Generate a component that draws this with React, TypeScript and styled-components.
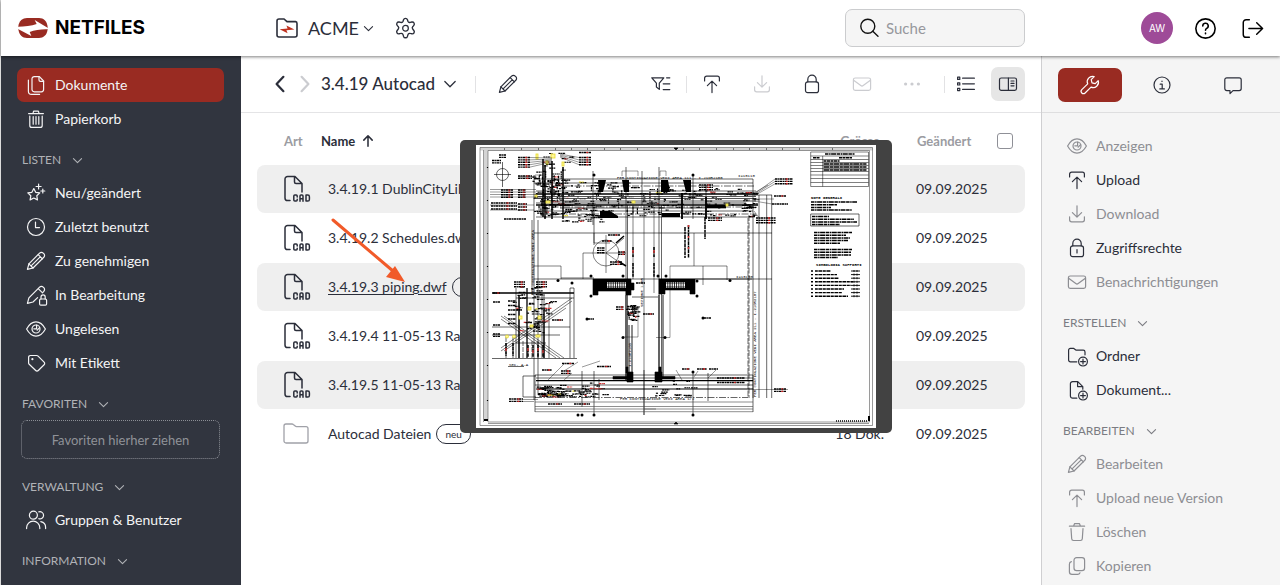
import React from "react";
import styled, { createGlobalStyle } from "styled-components";

const ink = "#2b2e3a";
const red = "#992b22";

const GlobalStyle = createGlobalStyle`
  *, *::before, *::after { box-sizing: border-box; }
  body { margin: 0; background: #fff; color: ${ink}; font: 14px/20px Lato, "Noto Sans", sans-serif; overflow: hidden; }
  button, input { font: inherit; color: inherit; }
  button { background: none; border: 0; padding: 0; cursor: pointer; }
  a { color: inherit; text-decoration: none; }
`;

/* ---------- icons ---------- */

type IconName = keyof typeof shapes;

const star = "M7.8 5.6l1.9 3.7 4.1.6-3 2.9.7 4.1-3.7-1.9-3.7 1.9.7-4.1-3-2.9 4.1-.6z";
const pencil = "M1.4 18.4l1.5-5.6L13.6 2.1a2.5 2.5 0 0 1 3.6 0l.6.6a2.5 2.5 0 0 1 0 3.6L7 17z";

const shapes = {
  docs: (
    <>
      <path d="M8.2 1.6h5.2l4.2 4.4v8.6a2.2 2.2 0 0 1-2.2 2.2H8.2A2.2 2.2 0 0 1 6 14.600V3.800a2.200 2.200 0 0 1 2.200-2.200z" />
      <path d="M13 1.800v3.200a1.400 1.400 0 0 0 1.400 1.400h3.200M2.400 5v11.200a3.200 3.200 0 0 0 3.200 3.200h8" />
    </>
  ),
  trashFull: <path d="M2.600 4.600h14.800M7 4.400l.6-2.300h4.800l.6 2.300M3.800 7v9.400a2 2 0 0 0 2 2h8.400a2 2 0 0 0 2-2V7M7.200 7.600v7.600M10 7.600v7.600M12.800 7.600v7.600" />,
  trash: <path d="M2.400 4.200h15.200M6.600 4l1-2.400h4.800l1 2.400M4 6.600l.7 10.200a1.800 1.800 0 0 0 1.800 1.700h7a1.800 1.800 0 0 0 1.800-1.700L16 6.600" />,
  stars: (
    <>
      <path d={star} />
      <path d="M12.600 1v5M10.100 3.500h5M16.800 6v4M14.800 8h4" />
    </>
  ),
  clock: (
    <>
      <circle cx="10" cy="10" r="8.500" />
      <path d="M9.500 5v5.600h4" />
    </>
  ),
  pencil: (
    <>
      <path d={pencil} />
      <path d="M12.200 3.600l4.200 4.200M2.900 12.800L7 17M14.200 5.800L5.600 14.400" />
    </>
  ),
  pencilLock: (
    <>
      <path d="M11.600 12.600L7 17l-5.600 1.400 1.500-5.600L13.600 2.100a2.500 2.500 0 0 1 3.600 0l.6.6a2.500 2.500 0 0 1 0 3.600l-1.400 1.500M12.200 3.600l3.600 3.600" />
      <rect x="13.600" y="14" width="7" height="6.200" rx="1.200" />
      <path d="M15 14v-2a2.100 2.100 0 0 1 4.200 0v2" />
    </>
  ),
  eye: (
    <>
      <path d="M.6 10C3 5.600 6.200 2.900 10 2.900S17 5.600 19.400 10C17 14.400 13.800 17.100 10 17.100S3 14.400.6 10z" />
      <circle cx="10" cy="10" r="4" />
      <path d="M10.600 6.200v3.600H7.800M13.600 8.600l-2.400 2.600" />
    </>
  ),
  tag: (
    <>
      <path d="M2.600 4.300a1.800 1.800 0 0 1 1.800-1.800h6.300a2 2 0 0 1 1.400.6l6 6a1.800 1.800 0 0 1 0 2.600l-5.800 5.800a1.800 1.800 0 0 1-2.600 0L3.200 11.300a2 2 0 0 1-.6-1.400z" />
      <circle cx="6.400" cy="6.200" r=".5" />
    </>
  ),
  people: (
    <>
      <circle cx="7.400" cy="5.200" r="4" />
      <path d="M.6 18.600v-.8a6.600 6.600 0 0 1 13.200 0v.8M12.800 1.900a3.600 3.600 0 1 1 0 6.800M14.800 11.600a6 6 0 0 1 4.800 6v1" />
    </>
  ),
  upload: <path d="M2.600 7V4.200a2 2 0 0 1 2-2h10.800a2 2 0 0 1 2 2V7M10 18.600V7.200M5.400 11.600L10 7.100l4.600 4.500" />,
  download: <path d="M2.600 12.800v3a2 2 0 0 0 2 2h10.800a2 2 0 0 0 2-2v-3M10 1.800v11M5.400 8.600l4.600 4.500 4.600-4.500" />,
  lock: (
    <>
      <rect x="3.500" y="7.800" width="13" height="10.800" rx="2.200" />
      <path d="M5.800 7.800V5.400a4.200 4.200 0 0 1 8.400 0v2.400" />
    </>
  ),
  lockHole: (
    <>
      <rect x="3.500" y="7.800" width="13" height="10.800" rx="2.200" />
      <path d="M5.800 7.800V5.400a4.200 4.200 0 0 1 8.400 0v2.400M10 11.600v3.400" />
    </>
  ),
  mail: (
    <>
      <rect x="1.400" y="4" width="17.200" height="12.400" rx="1.800" />
      <path d="M1.600 6.200l7.200 5.400a2 2 0 0 0 2.400 0l7.200-5.400" />
    </>
  ),
  dots: (
    <g fill="currentColor" stroke="none">
      <circle cx="3.600" cy="10" r="1.600" />
      <circle cx="10" cy="10" r="1.600" />
      <circle cx="16.400" cy="10" r="1.600" />
    </g>
  ),
  filter: <path d="M.8 3.800h12l-4.500 5.400v6.200L5.400 13V9.200zM15.600 3.800h3.200M12.200 9.800h6.600M12.200 15.600h6.600" />,
  list: (
    <>
      <path d="M6.600 4.200h11.800M6.600 9.800h11.800M6.600 15.400h11.800" />
      <rect x="1.600" y="3.200" width="2.200" height="2.200" />
      <rect x="1.600" y="8.800" width="2.200" height="2.200" />
      <rect x="1.600" y="14.400" width="2.200" height="2.200" />
    </>
  ),
  panel: (
    <>
      <rect x="1.500" y="4" width="17" height="12.400" rx="1.800" />
      <path d="M10.400 4v12.400M13 7h3M13 9.400h3M13 11.800h3" />
    </>
  ),
  wrench: <path d="M18.200 5.600l-3 3-3.200-.8-.8-3.200 3-3a5.300 5.300 0 0 0-6.500 7.200L1.800 14.700a2.100 2.100 0 0 0 3.300 3.300l5.900-5.900a5.300 5.300 0 0 0 7.200-6.500z" />,
  info: (
    <>
      <circle cx="10" cy="10" r="8" />
      <path d="M8.200 9.200h2v4.600M7.800 13.900h4.600M10 6v.5" />
    </>
  ),
  chat: <path d="M3.800 2.800h12.400a2 2 0 0 1 2 2v8.800a2 2 0 0 1-2 2H10l-3 3v-3H3.800a2 2 0 0 1-2-2V4.800a2 2 0 0 1 2-2z" />,
  copy: (
    <>
      <rect x="7" y="1.600" width="10.600" height="13" rx="2.600" />
      <path d="M4.400 5.600a2.600 2.600 0 0 0-2 2.600v7.600a2.600 2.600 0 0 0 2.600 2.600h5.600a2.600 2.600 0 0 0 2.400-1.600" />
    </>
  ),
  folderAdd: (
    <>
      <path d="M9.800 15.800H3.400a1.800 1.800 0 0 1-1.800-1.800V4.200a1.800 1.800 0 0 1 1.800-1.800h3.400l2.400 1.800h7a1.800 1.800 0 0 1 1.800 1.800v2.800" />
      <circle cx="16" cy="15.600" r="4.400" />
      <path d="M16 13.200V18M13.600 15.600h4.800" />
    </>
  ),
  docAdd: (
    <>
      <path d="M9.800 18.200H5.600A2.200 2.200 0 0 1 3.400 16V3.800a2.200 2.200 0 0 1 2.200-2.200h5.200l5 5v2.600M10.600 1.800v4.800h5" />
      <circle cx="16" cy="15.600" r="4.400" />
      <path d="M16 13.200V18M13.600 15.600h4.800" />
    </>
  ),
  search: (
    <>
      <circle cx="8.800" cy="8.200" r="7" />
      <path d="M13.800 13.300l5.200 4.900" />
    </>
  ),
  help: (
    <>
      <circle cx="10" cy="10" r="9.200" />
      <path d="M7.400 7.600a2.600 2.600 0 1 1 3.800 2.300c-.8.400-1.200.9-1.200 1.800M10 14.400v.5" />
    </>
  ),
  exit: <path d="M7 1.600H4a2.800 2.800 0 0 0-2.800 2.800v11.200A2.800 2.800 0 0 0 4 18.400h3M6.600 10h13M14 4.600l5.600 5.400-5.600 5.400" />,
  gear: (
    <>
      <path d="M8.300 1.400a1.800 1.800 0 0 1 3.400 0l.4 1.300a1.700 1.700 0 0 0 2.100 1l1.400-.3a1.800 1.800 0 0 1 1.700 2.900l-.9 1.100a1.700 1.700 0 0 0 0 2.300l.9 1.100a1.800 1.800 0 0 1-1.700 2.900l-1.400-.3a1.700 1.700 0 0 0-2.100 1.200l-.4 1.400a1.800 1.800 0 0 1-3.400 0l-.4-1.400a1.700 1.700 0 0 0-2.100-1.200l-1.400.3a1.800 1.800 0 0 1-1.700-2.900l.9-1.100a1.700 1.700 0 0 0 0-2.300l-.9-1.100a1.800 1.800 0 0 1 1.700-2.900l1.400.3a1.700 1.700 0 0 0 2.100-1z" transform="translate(-.9 .1) scale(1.090)" />
      <circle cx="10" cy="9.800" r="2.700" />
    </>
  ),
  left: <path d="M13.400 2.800L6.600 10l6.800 7.200" />,
  right: <path d="M6.600 2.800l6.800 7.200-6.800 7.200" />,
  down: <path d="M2.600 6.400L10 14l7.400-7.600" />,
  sortUp: <path d="M10 17.400V2.800M4 8.800l6-6.200 6 6.200" />,
};

const Svg = styled.svg`
  display: block;
  flex: none;
  fill: none;
  stroke: currentColor;
  stroke-linecap: round;
  stroke-linejoin: round;
  overflow: visible;
`;

function Icon({ name, size = 20, weight = 1.2 }: { name: IconName; size?: number; weight?: number }) {
  return (
    <Svg width={size} height={size} viewBox="0 0 20 20" strokeWidth={weight} aria-hidden="true">
      {shapes[name]}
    </Svg>
  );
}

/* ---------- frame ---------- */

const Shell = styled.div`
  height: 100vh;
  display: flex;
  flex-direction: column;
  border-left: 1px solid #dcdcdc;
`;
const columns = "240px minmax(0, 1fr) 239px";

const Header = styled.header`
  position: relative;
  z-index: 2;
  flex: none;
  height: 56px;
  display: grid;
  grid-template-columns: ${columns};
  align-items: center;
  background: #fff;
  box-shadow: 0 1px 3px rgba(0, 0, 0, 0.5);
`;
const Body = styled.div`
  flex: 1;
  min-height: 0;
  display: grid;
  grid-template-columns: ${columns};
`;

const Brand = styled.a`
  display: flex;
  align-items: center;
  gap: 7px;
  padding-left: 17px;
  color: #000;
  font: 700 19px/24px Inter, sans-serif;
`;
const HeaderMain = styled.div`
  display: flex;
  align-items: center;
  padding: 0 16px 0 35px;
`;
const Workspace = styled.button`
  display: flex;
  align-items: center;
  gap: 4px;
  font-size: 18px;
  line-height: 24px;
  margin-right: 21px;
  > svg:first-child { margin-right: 6px; }
`;
const IconButton = styled.button<{ $off?: boolean }>`
  display: flex;
  align-items: center;
  justify-content: center;
  color: ${(p) => (p.$off ? "#cbccd0" : ink)};
`;
const Search = styled.label`
  margin-left: auto;
  width: 180px;
  height: 38px;
  display: flex;
  align-items: center;
  gap: 7px;
  padding: 0 13px;
  background: #f5f5f5;
  border: 1px solid #cbccce;
  border-radius: 7px;
  color: #111;
  font-size: 15px;
  input {
    min-width: 0;
    flex: 1;
    border: 0;
    outline: 0;
    background: none;
    padding: 0;
  }
  input::placeholder { color: #97989d; opacity: 1; }
`;
const Account = styled.div`
  display: flex;
  align-items: center;
  justify-content: flex-end;
  gap: 22px;
  padding-right: 17px;
  button { color: #000; }
  > button:last-child { margin-left: 4px; }
`;
const Avatar = styled.span`
  width: 32px;
  height: 32px;
  border-radius: 50%;
  background: #9e4b98;
  color: #fff;
  font: 10px/32px Inter, sans-serif;
  text-align: center;
`;

/* ---------- navigation lists ---------- */

const Sidebar = styled.nav`
  overflow: hidden;
  background: #31353f;
  padding: 12px 17px 0 16px;
`;
const Tools = styled.aside`
  overflow: hidden;
  background: #f5f5f5;
  border-left: 1px solid #cfcfd1;
`;
const ToolList = styled.div`
  padding: 16px 16px 0;
`;
const Entry = styled.a<{ $active?: boolean; $light?: boolean; $off?: boolean }>`
  height: 34px;
  display: flex;
  align-items: center;
  gap: 9px;
  padding-left: 9px;
  border-radius: 7px;
  background: ${(p) => (p.$active ? red : "transparent")};
  color: ${(p) => (p.$light ? (p.$off ? "#8d8e93" : ink) : "#f4f4f5")};
`;
const GroupTitle = styled.button<{ $light?: boolean }>`
  display: flex;
  align-items: center;
  gap: 11px;
  height: 18px;
  margin: 15px 0 7px 5px;
  font-size: 12px;
  line-height: 18px;
  color: ${(p) => (p.$light ? "#7b7c82" : "#b0b2b6")};
`;
const DropZone = styled.div`
  height: 39px;
  margin: 0 4px 19px;
  border: 1px dotted #8b8e95;
  border-radius: 6px;
  color: #8f9298;
  font-size: 13px;
  line-height: 38px;
  text-align: center;
`;

const TabBar = styled.div`
  height: 57px;
  display: flex;
  align-items: center;
  justify-content: space-between;
  padding: 2px 15px 0 16px;
  border-bottom: 1px solid #dededf;
`;
const Tab = styled.button<{ $active?: boolean }>`
  width: 64px;
  height: 34px;
  display: flex;
  align-items: center;
  justify-content: center;
  border-radius: 7px;
  background: ${(p) => (p.$active ? red : "transparent")};
  color: ${(p) => (p.$active ? "#fff" : ink)};
`;

/* ---------- document area ---------- */

const Main = styled.main`
  position: relative;
  min-width: 0;
  background: #fff;
`;
const Toolbar = styled.div`
  height: 57px;
  display: flex;
  align-items: center;
  padding: 0 16px 0 29px;
  border-bottom: 1px solid #e4e4e6;
`;
const Title = styled.button`
  display: flex;
  align-items: center;
  gap: 8px;
  margin-left: 1px;
  font-size: 17px;
  line-height: 24px;
  font-weight: 500;
`;
const Rule = styled.span`
  width: 1px;
  height: 17px;
  background: #e2e2e4;
  margin: 0 11px 0 15px;
`;
const TitleSide = styled.div`
  display: flex;
  align-items: center;
  gap: 5px;
  flex: 1;
  > ${Rule} { margin: 0 17px 0 13px; }
`;
const Actions = styled.div`
  display: flex;
  align-items: center;
`;
const ActionGroup = styled.div`
  display: flex;
  gap: 30px;
  margin: 0 7px 0 4px;
`;
const Toggle = styled.button`
  width: 34px;
  height: 34px;
  margin-left: 15px;
  display: flex;
  align-items: center;
  justify-content: center;
  border-radius: 7px;
  background: #e6e6e6;
`;

const TableArea = styled.div`
  padding: 3px 16px 0;
`;
const Table = styled.table`
  width: 100%;
  table-layout: fixed;
  border-spacing: 0 1px;
`;
const Head = styled.th<{ $strong?: boolean; $right?: boolean }>`
  height: 47px;
  padding: 0;
  font-size: 13px;
  line-height: 18px;
  font-weight: 700;
  text-align: ${(p) => (p.$right ? "right" : "left")};
  color: ${(p) => (p.$strong ? ink : "#9b9ca2")};
  &:first-child { padding-left: 27px; }
  &:nth-child(3) { padding-right: 4px; }
  &:nth-child(4) { padding-left: 33px; }
`;
const SortButton = styled.button`
  display: flex;
  align-items: center;
  gap: 6px;
  font-weight: 700;
`;
const Row = styled.tr<{ $shaded?: boolean }>`
  td { background: ${(p) => (p.$shaded ? "#efefef" : "transparent")}; }
`;
const Cell = styled.td<{ $right?: boolean }>`
  height: 48px;
  padding: 0;
  white-space: nowrap;
  text-align: ${(p) => (p.$right ? "right" : "left")};
  &:first-child { border-radius: 8px 0 0 8px; padding-left: 26px; }
  &:last-child { border-radius: 0 8px 8px 0; }
  &:nth-child(2) { padding-left: 7px; }
  &:nth-child(4) { padding-left: 32px; }
`;
const NameLine = styled.div`
  display: flex;
  align-items: center;
  gap: 5px;
`;
const NameLink = styled.a<{ $hover?: boolean }>`
  text-decoration: ${(p) => (p.$hover ? "underline" : "none")};
  text-underline-offset: 2px;
`;
const Badge = styled.span`
  height: 20px;
  padding: 0 8px;
  border: 1px solid ${ink};
  border-radius: 10px;
  font-size: 10px;
  line-height: 18px;
`;
const Check = styled.input`
  appearance: none;
  display: block;
  width: 16px;
  height: 16px;
  margin: 0 0 0 8px;
  border: 1px solid #8f9097;
  border-radius: 3px;
  background: #fff;
`;

const Preview = styled.figure`
  position: absolute;
  left: 219px;
  top: 84px;
  margin: 0;
  padding: 5px 16px;
  border-radius: 5px;
  background: #424242;
`;
const Pointer = styled.svg`
  position: absolute;
  left: 90px;
  top: 162px;
  pointer-events: none;
`;

/* ---------- drawings ---------- */

function Logo() {
  return (
    <svg width="30" height="20" viewBox="0 0 88 60" aria-hidden="true">
      <path fill={red} d="M0 25C2 8 13 0 26 0h36c14 0 24 9 26 27v7C86 52 75 60 62 60H26C12 60 2 51 0 33z" />
      <path fill="#fff" d="M-1 26C18 25 40 24 55 18L49 6 89 30v4C70 33 50 36 34 42l5 12L-1 33z" />
    </svg>
  );
}

function WorkspaceIcon() {
  return (
    <svg width="22" height="20" viewBox="0 0 22 20" aria-hidden="true">
      <path d="M1 3a2 2 0 0 1 2-2h5l3 2.600h8.500a1.800 1.800 0 0 1 1.500 1.800V17a2 2 0 0 1-2 2H3a2 2 0 0 1-2-2z" fill="none" stroke={ink} strokeWidth="1.600" />
      <path d="M3.600 11.200l8-.7-1.200-3 8 3.900-8 .8 1.200 3z" fill="#c0311f" />
    </svg>
  );
}

function CadIcon() {
  return (
    <Svg width="28" height="28" viewBox="0 0 28 28" strokeWidth="1.500" role="img" aria-label="CAD">
      <path d="M7 25.500H4.600A2.600 2.600 0 0 1 2 22.900V4.100A2.600 2.600 0 0 1 4.600 1.500H12l7 7V17M11.500 1.800V7A1.500 1.500 0 0 0 13 8.500h5.800" />
      <path d="M14.200 22v-.9a1 1 0 0 0-1-1h-1.400a1 1 0 0 0-1 1v4a1 1 0 0 0 1 1h1.400a1 1 0 0 0 1-1v-.9" />
      <path d="M17 26.300v-5.200a1 1 0 0 1 1-1h1a1 1 0 0 1 1 1v5.200M17 23.800h3M23 20.100v6h1.800a1.600 1.600 0 0 0 1.600-1.600v-2.800a1.600 1.600 0 0 0-1.600-1.600z" />
    </Svg>
  );
}

const MutedSvg = styled(Svg)`
  stroke: #a0a1a8;
`;

function FolderIcon() {
  return (
    <MutedSvg width="26" height="22" viewBox="0 0 26 22" strokeWidth="1.300" role="img" aria-label="Ordner">
      <path d="M1 3a2 2 0 0 1 2-2h6a2 2 0 0 1 1.300.5l1.900 1.600a2 2 0 0 0 1.300.5H23a2 2 0 0 1 2 2V18a2 2 0 0 1-2 2H3a2 2 0 0 1-2-2z" />
    </MutedSvg>
  );
}

function random(seed: number) {
  let s = seed * 7919;
  return () => {
    s = (s * 16807) % 2147483647;
    return s / 2147483647;
  };
}

/* Short annotation marks scattered over one region of the plan. */
function Marks({ x, y, w, h, n, seed, vertical = false }: { x: number; y: number; w: number; h: number; n: number; seed: number; vertical?: boolean }) {
  const r = random(seed);
  r();
  return (
    <>
      {Array.from({ length: n }, (_, i) => {
        const px = x + r() * w;
        const py = y + r() * h;
        const len = 2 + r() * 6;
        const tint = r();
        const color = tint > 0.985 ? "#e8dc2a" : tint > 0.93 ? "#c33" : "#000";
        const d = vertical ? `M${px} ${py}v${len}` : `M${px} ${py}h${len}`;
        return <path key={i} d={d} stroke={color} strokeWidth={1.200} strokeDasharray="2.200 .5 1.200 .4" />;
      })}
    </>
  );
}

/* A column of equally long notes with a red figure inside each. */
function Notes({ x, y, w, rows, pitch = 2.4, mark = true }: { x: number; y: number; w: number; rows: number; pitch?: number; mark?: boolean }) {
  return (
    <>
      {Array.from({ length: rows }, (_, i) => (
        <g key={i}>
          <path d={`M${x} ${y + i * pitch}h${w}`} strokeWidth="1.400" strokeDasharray="2.600 .5 1.400 .4" />
          {mark && <path d={`M${x + w * 0.6} ${y + i * pitch}h2`} stroke="#c22" strokeWidth="1.300" />}
        </g>
      ))}
    </>
  );
}

function Paragraph({ x, y, widths }: { x: number; y: number; widths: number[] }) {
  return (
    <>
      {widths.map((w, i) => (
        <path key={i} d={`M${x} ${y + i * 2.700}h${w}`} strokeWidth="1.500" strokeDasharray="3.500 .6 1.500 .5 5 .6" />
      ))}
    </>
  );
}

function Dots({ at }: { at: number[][] }) {
  return (
    <>
      {at.map(([x, y], i) => (
        <circle key={i} cx={x} cy={y} r="1.500" fill="#000" stroke="none" />
      ))}
    </>
  );
}

function Fan({ x, y, tx, ty, n, pitch }: { x: number; y: number; tx: number; ty: number; n: number; pitch: number }) {
  return <path d={Array.from({ length: n }, (_, i) => `M${x} ${y + i * pitch}L${tx} ${ty + i}`).join("")} strokeWidth=".4" />;
}

function Blueprint() {
  return (
    <svg width="400" height="283" viewBox="0 0 400 283" display="block" role="img" aria-label="piping.dwf" fill="none" stroke="#000" strokeWidth=".6">
      <rect width="400" height="283" fill="#fff" stroke="none" />
      <path d="M4 2.500H397V5.500H12V276H8V5.500H4z" fill="#d4d4d4" stroke="none" />
      <path d="M4 2.500H396.500V280.500H4zM12 5.500H393.500V277H12zM7.500 5V277M12 278.500H393" stroke="#555" />
      <path d="M28 4h1M45 4h1M62 4h1M79 4h1M95 4h1M111 4h1M128 4h1M144 4h1M161 4h1M207 4h1M223 4h1M240 4h1M257 4h1M273 4h1M290 4h1M306 4h1M323 4h1M356 4h1M11.500 22v1M11.500 55v1M11.500 88v1M11.500 121v1M11.500 154v1M11.500 187v1M11.500 220v1M11.500 255v1" strokeWidth="1.200" />
      <path d="M198 3l4 0-2 2zM198 279l4 0-2-2z" fill="#000" />

      <circle cx="26.500" cy="29.500" r="6" />
      <path d="M26.500 17V42M18 29.500H35" />
      <Notes x={23} y={10} w={7} rows={2} mark={false} />
      <Notes x={16} y={15.500} w={9} rows={2} mark={false} />

      {/* upper pipe rack */}
      <Marks x={56} y={26} w={34} h={44} n={60} seed={11} />
      <Marks x={62} y={36} w={92} h={36} n={105} seed={23} />
      <Marks x={150} y={42} w={122} h={29} n={95} seed={37} />
      <Marks x={78} y={70} w={54} h={8} n={20} seed={41} />
      <Marks x={62} y={8} w={34} h={18} n={14} seed={53} />
      <Marks x={60} y={26} w={26} h={40} n={26} seed={59} vertical />
      <Marks x={100} y={40} w={100} h={26} n={22} seed={61} vertical />
      <path d="M42 32H59M58 34H277M58 38H277M60 46H280M60 66H277M60 72H277M58 88H296M58 30V255M56 75V150M62 75V250M277 34V253" />
      <path d="M60 49H282M60 60H282" strokeWidth="1.600" />
      <path d="M60 51.500H280M60 53.500H280M64 56H280M60 58H270M84 63H250" strokeWidth=".9" stroke="#444" />
      <path d="M64 41H278M64 62H278M70 69H280" strokeDasharray="7 1.500 1.500 1.500" />
      <path d="M67 14V72M69 20V74M76 16V74M87 22V74" strokeWidth="1.500" />
      <path d="M117 26V80M150 22V236M151.500 60V236M183 22V236M185.500 60V236M206 48V74M217 30V74M230 40V74M118 60V100M166 26V60" />
      <path d="M206 48V74M230 52V74" strokeWidth="1.800" />
      <path d="M122 35h8l-3 12h-4zM146 35h7v12h-5zM185 35h7l2 12h-9zM207 35h8v12h-5zM124 66h10l8 5v2h-18zM230 60h20v3h-20zM186 68h18v4h-18z" fill="#000" stroke="none" />
      <path d="M146 31V26H162V31M184 31V26H190V31M59 34V30H63" strokeWidth=".4" />
      <g stroke="#e6d92c" fill="#fff799" strokeWidth=".8">
        <rect x="60" y="9" width="2" height="5" />
        <rect x="75" y="9" width="4" height="4" />
        <rect x="70" y="16" width="2" height="3" />
        <rect x="86" y="17" width="2" height="4" />
        <rect x="70" y="56" width="4" height="2" />
        <rect x="59" y="50" width="2" height="2" />
        <rect x="156" y="56" width="3" height="2" />
        <rect x="250" y="59" width="2" height="2" />
      </g>
      <Notes x={42} y={12.500} w={12} rows={5} />
      <Fan x={54} y={12.500} tx={76} ty={13} n={5} pitch={2.400} />
      <Notes x={103} y={7.500} w={12} rows={1} />
      <Notes x={103} y={12.500} w={12} rows={4} />
      <Fan x={103} y={12.500} tx={84} ty={9} n={4} pitch={2.400} />
      <Notes x={42} y={31} w={14} rows={2} />
      <Notes x={25} y={45} w={12} rows={4} />
      <Notes x={42} y={45} w={8} rows={4} />
      <path d="M14 44.500H60M14 47H60M14 49.500H60M14 52H60M14 60H58M14 65H58" strokeWidth=".4" />
      <Notes x={15} y={58} w={26} rows={3} pitch={3} />
      <Notes x={42} y={59} w={9} rows={3} pitch={3} />
      <Notes x={28} y={74} w={22} rows={1} mark={false} />
      <text x="141" y="33.500" fontSize="4" fontFamily="Liberation Mono" fill="#000" stroke="none">PER CONTINUAZIONE VEDI AREA 111 - I-21OR2100</text>
      <Notes x={299} y={34} w={18} rows={3} />
      <Fan x={299} y={34} tx={278} ty={49} n={3} pitch={2.400} />
      <Notes x={298} y={51} w={12} rows={1} />
      <Notes x={296} y={59} w={16} rows={1} mark={false} />
      <Notes x={280} y={73} w={20} rows={3} />
      <Marks x={266} y={46} w={12} h={26} n={22} seed={71} />
      <path d="M278 48l14-8M278 54H298M278 56l18 3M278 66l6 8" strokeWidth=".4" />
      <g strokeWidth="1.500" strokeDasharray="4 .6 3 .5">
        <path d="M209 82V113M212.500 80V113M229 72V94" />
        <path d="M212.500 80V113" stroke="#c33" strokeDasharray="2 9" />
      </g>
      <Notes x={232} y={73} w={14} rows={2} />
      <Notes x={223} y={40} w={14} rows={3} />

      {/* centre bay */}
      <path d="M58 121H85V134M107 108H118M107 108V134M118 88V98H134M157 60V134M168 60V270M178 60V148M218 88V121M227 121V140M194 121H251V135" strokeWidth=".5" />
      <path d="M273 70V253M272 73V253" strokeDasharray="6 1.500" />
      <path d="M290.700 50V253M295.700 50V253M268 50H296" />
      <circle cx="130" cy="108" r="13" strokeWidth=".5" />
      <path d="M130 90V128M118 108H150M130 108l18-15M130 108l17 12" strokeWidth=".5" />
      <path d="M140 98l8-7M142 116l8 5" strokeWidth="1.500" />
      <Notes x={121} y={103} w={8} rows={3} mark={false} />
      <Notes x={132} y={90} w={12} rows={1} />
      <Notes x={126} y={96} w={10} rows={1} />
      <Notes x={134} y={117} w={12} rows={2} />
      <Notes x={142} y={107} w={7} rows={2} />
      <path d="M157 102V112M157 118V132M178 102V112M178 118V132" strokeWidth="1.500" strokeDasharray="3 .6" />
      <path d="M157 105v3M178 105v3" stroke="#c33" strokeWidth="1.500" />
      <path d="M58 134H276M85 133H118M156 152H182M219 134H296" />
      <Notes x={160} y={138} w={9} rows={1} mark={false} />
      <Dots at={[[82, 135.5], [96, 138], [115, 131], [147, 131], [182, 131], [190, 131], [118, 30], [217, 30], [254, 135.5], [221, 136], [221, 151], [115, 151], [111, 174], [227, 173], [147, 192.5], [189, 192.5], [102, 270], [106, 270], [118, 270], [217, 270], [217, 227]]} />
      <path d="M117 134h38v4h3v7h-3v5h-5v-4h-28v4h-5zM183 134h36v15h-5v-4h-25v4h-6z" fill="#000" />
      <path d="M131 140h19M190 140h19" stroke="#fff" strokeWidth="6" strokeDasharray="1.400 .8" />
      <path d="M131 138h19M131 142h19M190 138h19M190 142h19" strokeWidth=".7" />
      <Notes x={112} y={174} w={6} rows={1} mark={false} />
      <Notes x={228} y={173} w={7} rows={1} mark={false} />
      <path d="M150 150V236M153 180V232M156 180V232M183 150V236M187 150V232" strokeWidth=".9" />
      <Marks x={150} y={160} w={8} h={16} n={20} seed={101} />
      <Marks x={152} y={158} w={8} h={14} n={8} seed={103} vertical />
      <Notes x={140} y={162} w={8} rows={2} />
      <Notes x={167} y={169} w={11} rows={1} />
      <path d="M162 162V192H147M194 121V192.500H180" strokeWidth=".4" />
      <g fill="#000" stroke="none" fontFamily="Liberation Mono" fontSize="4">
        <text transform="translate(58 150) rotate(-90)">PER CONTINUAZIONE VEDI AREA</text>
        <text transform="translate(280 252) rotate(-90)">PER CONTINUAZIONE VEDI AREA 211 - I-21OR2107</text>
        <text transform="translate(167 162) rotate(-90)">SEZIONE 1-OR</text>
        <text transform="translate(155 222) rotate(-90)">I-21OR2100</text>
        <text x="262" y="32">I=10110</text>
        <text x="260" y="133">I=10100</text>
        <text x="144" y="255">PER CONTINUAZIONE VEDI AREA 1/2</text>
      </g>

      {/* section A-A */}
      <path d="M40 143V213M43 150V213M68 150V213M66 150V213M73 158V213M94 143V213M98 143V213M94 143H98M40 153H98M16 182H94M16 190H84M16 213.500H101M40 198H70" />
      <path d="M16 148H98M43 150V213M51 143V213M68 165V213" strokeWidth="1.300" />
      <path d="M25 171L84 213M25 174L80 213M28 171L88 213M25 203L96 153M25 206L96 156M28 206L90 163" strokeWidth=".5" />
      <path d="M30 192V213M37 192V213M47 196V213M56 196V213M62 196V213" strokeDasharray="5 1" />
      <Marks x={36} y={142} w={30} h={24} n={26} seed={107} />
      <Marks x={42} y={162} w={26} h={28} n={32} seed={109} />
      <path d="M30 198v13M37 198v13M52 200v12M57 200v12M62 200v12M67 200v12" strokeWidth="1.500" strokeDasharray="3.500 .6" />
      <path d="M30 203v3M52 203v3M57 205v3M62 203v3M67 205v3" stroke="#c33" strokeWidth="1.400" />
      <Marks x={68} y={156} w={8} h={26} n={8} seed={127} />
      <Notes x={38} y={137} w={11} rows={3} />
      <Notes x={60} y={137} w={11} rows={3} />
      <Notes x={17} y={148} w={7} rows={1} />
      <Notes x={17} y={157} w={7} rows={1} mark={false} />
      <Notes x={32} y={156} w={8} rows={6} pitch={4.500} mark={false} />
      <Notes x={17} y={180} w={7} rows={1} mark={false} />
      <Notes x={17} y={189} w={7} rows={2} mark={false} />
      <Notes x={76} y={175} w={11} rows={1} />
      <g stroke="#e6d92c" fill="#fff799" strokeWidth=".8">
        <circle cx="31" cy="191.500" r="1.500" />
        <circle cx="38" cy="191.500" r="1.500" />
        <rect x="43" y="171" width="3" height="3" />
        <rect x="52" y="162" width="3" height="3" />
        <rect x="62" y="171" width="3" height="3" />
        <rect x="60" y="190" width="4" height="2" />
        <rect x="54" y="180" width="3" height="2" />
      </g>
      <text x="33" y="220.500" fontSize="4" fontFamily="Liberation Mono" fill="#000" stroke="none">SEC. A-A</text>
      <path d="M32 221.500H48" />

      {/* lower pipe rack */}
      <path d="M59 230H277M60 233H277M59 240H277M47 252H60M47 231H60M47 231V252M59 230V267M277 230V267M283 50V253M106 226V262M118 226V270M123 234V255M217 227V270M232 228V256M168 225V270" />
      <path d="M60 235.700H277M60 244H277" strokeWidth="1.200" />
      <path d="M59 252.500H272" strokeDasharray="7 1.500 1.500 1.500" />
      <path d="M59 257H277M59 261.500H277M59 264H180M59 266.700H277M168 264H277" stroke="#444" />
      <path d="M151 227h6v10h-6zM179 227h7v10h-7zM137 231.500h17v2.500h-17zM186 231.500h13v2.500h-13zM150 222h2v6h-2zM183 222h2v6h-2z" fill="#000" />
      <Marks x={60} y={240} w={50} h={12} n={55} seed={131} />
      <Marks x={62} y={246} w={24} h={6} n={18} seed={137} />
      <Marks x={106} y={238} w={24} h={14} n={14} seed={149} />
      <Marks x={176} y={236} w={40} h={16} n={18} seed={151} />
      <Notes x={66} y={225} w={10} rows={1} />
      <Notes x={85} y={226} w={10} rows={2} />
      <Notes x={206} y={224} w={8} rows={1} />
      <Notes x={221} y={224} w={10} rows={1} />
      <Notes x={233} y={224} w={9} rows={1} mark={false} />
      <Notes x={72} y={259} w={14} rows={1} />
      <Notes x={98} y={259} w={16} rows={1} />
      <Notes x={241} y={233} w={28} rows={2} pitch={4.500} />
      <Notes x={298} y={244} w={12} rows={2} />
      <path d="M277 244.500H312" strokeWidth=".4" />
      <Notes x={33} y={254} w={14} rows={2} />
      <path d="M47 254.500H62M47 256.500H58M72 235l16-16M88 226l14-9M106 222l18-6M96 228l-8 7M206 235l-6-10M222 226l-4 6M240 225l-8 8" strokeWidth=".4" />
      <Notes x={86} y={218.500} w={12} rows={1} />
      <Notes x={121} y={221.500} w={14} rows={1} />

      {/* title block and legend */}
      <path d="M334.700 7H392.500V41.500H334.700zM346.700 11V41.500M334.700 11H392.500M334.700 14.500H392.500M334.700 17.500H392.500M334.700 20.500H392.500M334.700 23.500H392.500M334.700 26.500H392.500M334.700 30H392.500M334.700 33.500H392.500M334.700 37.500H392.500" strokeWidth=".5" />
      <Paragraph x={349} y={9} widths={[30]} />
      <path d="M363 12.800h13M337 12.800h7M347.500 16h16" strokeWidth="1.400" strokeDasharray="3 .5" />
      <path d="M347.500 19h43M347.500 22h43M347.500 25h43" strokeWidth="1.700" strokeDasharray="6 .5 3 .4" />
      <g fill="#000" stroke="none" fontFamily="Liberation Mono" fontWeight="700" fontSize="4">
        <text x="335" y="53.500">NOTE GENERALI</text>
        <text x="340" y="121">SIMBOLOGIA SUPPORTI</text>
      </g>
      <Paragraph x={335} y={57} widths={[46, 26, 20, 41]} />
      <path d="M334.700 69H383V81H334.700z" />
      <Paragraph x={336} y={71.500} widths={[17, 42, 45, 28]} />
      <Paragraph x={338} y={87.500} widths={[38, 32, 36, 34, 26]} />
      <Paragraph x={338} y={104.500} widths={[38, 37, 37, 24]} />
      {[16, 22, 24, 38, 36, 29, 27, 33].map((w, i) => (
        <g key={i}>
          <path d={`M335 ${126 + i * 3.600}h2M339 ${126 + i * 3.600}h${w}`} strokeWidth="1.400" strokeDasharray="2.800 .6 4 .6" />
          <path d={`M375 ${126 + i * 3.600}h9M378 ${125 + i * 3.600}v2M381 ${125 + i * 3.600}v2`} strokeWidth=".9" />
        </g>
      ))}
      <path d="M360 276h32" strokeWidth="1.500" strokeDasharray="1 1" />
      <path d="M8 275h4M393 271v5" strokeWidth="2" />
    </svg>
  );
}

/* ---------- content ---------- */

type Item = { icon: IconName; label: string; off?: boolean };

const lists: Item[] = [
  { icon: "stars", label: "Neu/geändert" },
  { icon: "clock", label: "Zuletzt benutzt" },
  { icon: "pencil", label: "Zu genehmigen" },
  { icon: "pencilLock", label: "In Bearbeitung" },
  { icon: "eye", label: "Ungelesen" },
  { icon: "tag", label: "Mit Etikett" },
];
const fileTools: Item[] = [
  { icon: "eye", label: "Anzeigen", off: true },
  { icon: "upload", label: "Upload" },
  { icon: "download", label: "Download", off: true },
  { icon: "lockHole", label: "Zugriffsrechte" },
  { icon: "mail", label: "Benachrichtigungen", off: true },
];
const createTools: Item[] = [
  { icon: "folderAdd", label: "Ordner" },
  { icon: "docAdd", label: "Dokument..." },
];
const editTools: Item[] = [
  { icon: "pencil", label: "Bearbeiten", off: true },
  { icon: "upload", label: "Upload neue Version", off: true },
  { icon: "trash", label: "Löschen", off: true },
  { icon: "copy", label: "Kopieren", off: true },
];
const rows = [
  { name: "3.4.19.1 DublinCityLibrary.dwf" },
  { name: "3.4.19.2 Schedules.dwf" },
  { name: "3.4.19.3 piping.dwf", hover: true, isNew: true },
  { name: "3.4.19.4 11-05-13 Radial.dwf" },
  { name: "3.4.19.5 11-05-13 Rack.dwf" },
  { name: "Autocad Dateien", folder: true, isNew: true, size: "18 Dok." },
];

function Entries({ items, light }: { items: Item[]; light?: boolean }) {
  return (
    <>
      {items.map((it) => (
        <Entry key={it.label} href="#" $light={light} $off={it.off}>
          <Icon name={it.icon} />
          {it.label}
        </Entry>
      ))}
    </>
  );
}

function Group({ title, light }: { title: string; light?: boolean }) {
  return (
    <GroupTitle $light={light}>
      {title}
      <Icon name="down" size={11} weight={2} />
    </GroupTitle>
  );
}

function Tool({ icon, label, off }: Item) {
  return (
    <IconButton $off={off} disabled={off} aria-label={label}>
      <Icon name={icon} />
    </IconButton>
  );
}

export default function App() {
  return (
    <Shell>
      <GlobalStyle />
      <Header>
        <Brand href="#">
          <Logo />
          NETFILES
        </Brand>
        <HeaderMain>
          <Workspace>
            <WorkspaceIcon />
            ACME
            <Icon name="down" size={11} weight={2} />
          </Workspace>
          <IconButton aria-label="Einstellungen">
            <Icon name="gear" size={21} />
          </IconButton>
          <Search>
            <Icon name="search" weight={1.400} />
            <input type="search" placeholder="Suche" aria-label="Suche" />
          </Search>
        </HeaderMain>
        <Account>
          <Avatar>AW</Avatar>
          <IconButton aria-label="Hilfe">
            <Icon name="help" size={21} weight={1.500} />
          </IconButton>
          <IconButton aria-label="Abmelden">
            <Icon name="exit" size={21} weight={1.400} />
          </IconButton>
        </Account>
      </Header>

      <Body>
        <Sidebar>
          <Entry href="#" $active>
            <Icon name="docs" />
            Dokumente
          </Entry>
          <Entry href="#">
            <Icon name="trashFull" />
            Papierkorb
          </Entry>
          <Group title="LISTEN" />
          <Entries items={lists} />
          <Group title="FAVORITEN" />
          <DropZone>Favoriten hierher ziehen</DropZone>
          <Group title="VERWALTUNG" />
          <Entries items={[{ icon: "people", label: "Gruppen & Benutzer" }]} />
          <Group title="INFORMATION" />
        </Sidebar>

        <Main>
          <Toolbar>
            <TitleSide>
              <IconButton aria-label="Zurück">
                <Icon name="left" weight={2.200} />
              </IconButton>
              <IconButton $off aria-label="Vorwärts">
                <Icon name="right" weight={2.200} />
              </IconButton>
              <Title>
                3.4.19 Autocad
                <Icon name="down" size={14} weight={1.800} />
              </Title>
              <Rule />
              <Tool icon="pencil" label="Bearbeiten" />
            </TitleSide>
            <Actions>
              <Tool icon="filter" label="Filter" />
              <Rule />
              <ActionGroup>
                <Tool icon="upload" label="Upload" />
                <Tool icon="download" label="Download" off />
                <Tool icon="lock" label="Zugriffsrechte" />
                <Tool icon="mail" label="Benachrichtigungen" off />
                <Tool icon="dots" label="Mehr" off />
              </ActionGroup>
              <Rule />
              <Tool icon="list" label="Liste" />
              <Toggle aria-label="Seitenleiste">
                <Icon name="panel" />
              </Toggle>
            </Actions>
          </Toolbar>

          <TableArea>
            <Table>
              <colgroup>
                <col width="64" />
                <col />
                <col width="100" />
                <col width="105" />
                <col width="36" />
              </colgroup>
              <thead>
                <tr>
                  <Head>Art</Head>
                  <Head $strong>
                    <SortButton>
                      Name
                      <Icon name="sortUp" size={14} weight={2.200} />
                    </SortButton>
                  </Head>
                  <Head $right>Grösse</Head>
                  <Head>Geändert</Head>
                  <Head>
                    <Check type="checkbox" aria-label="Alle auswählen" />
                  </Head>
                </tr>
              </thead>
              <tbody>
                {rows.map((row, i) => (
                  <Row key={row.name} $shaded={i % 2 === 0 && !row.folder}>
                    <Cell>{row.folder ? <FolderIcon /> : <CadIcon />}</Cell>
                    <Cell>
                      <NameLine>
                        <NameLink href="#" $hover={row.hover}>
                          {row.name}
                        </NameLink>
                        {row.isNew && <Badge>neu</Badge>}
                      </NameLine>
                    </Cell>
                    <Cell $right>{row.size}</Cell>
                    <Cell>09.09.2025</Cell>
                    <Cell />
                  </Row>
                ))}
              </tbody>
            </Table>
          </TableArea>

          <Preview>
            <Blueprint />
          </Preview>
          <Pointer width="76" height="66" viewBox="0 0 76 66" aria-hidden="true">
            <path d="M2 2L62 53" stroke="#f15a29" strokeWidth="3" strokeLinecap="round" />
            <path d="M74 64L64 48L55 59z" fill="#f15a29" />
          </Pointer>
        </Main>

        <Tools>
          <TabBar role="tablist">
            <Tab $active role="tab" aria-selected="true" aria-label="Werkzeuge">
              <Icon name="wrench" />
            </Tab>
            <Tab role="tab" aria-selected="false" aria-label="Information">
              <Icon name="info" />
            </Tab>
            <Tab role="tab" aria-selected="false" aria-label="Kommentare">
              <Icon name="chat" />
            </Tab>
          </TabBar>
          <ToolList>
            <Entries items={fileTools} light />
            <Group title="ERSTELLEN" light />
            <Entries items={createTools} light />
            <Group title="BEARBEITEN" light />
            <Entries items={editTools} light />
          </ToolList>
        </Tools>
      </Body>
    </Shell>
  );
}
